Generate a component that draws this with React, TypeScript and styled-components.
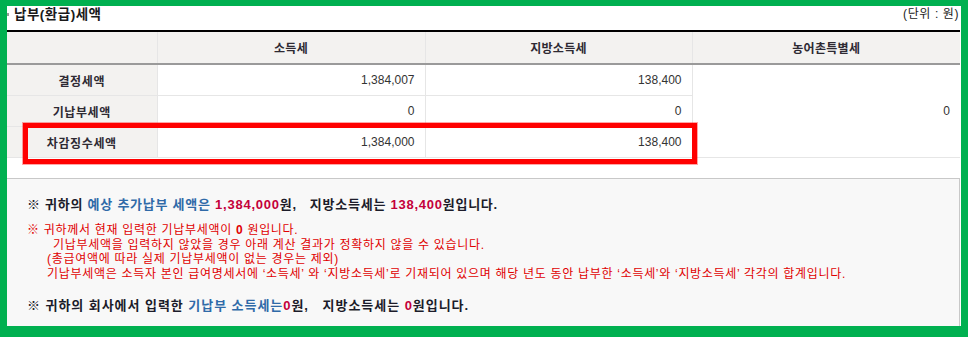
import styled, { createGlobalStyle } from "styled-components";

const GlobalStyle = createGlobalStyle`
  html, body {
    margin: 0;
    padding: 0;
    background: #fff;
  }
  body {
    font-family: "Liberation Sans", "Noto Sans CJK KR", sans-serif;
  }
`;

const rows = [
  { label: "결정세액", income: "1,384,007", local: "138,400" },
  { label: "기납부세액", income: "0", local: "0" },
  { label: "차감징수세액", income: "1,384,000", local: "138,400" },
];

export default function App() {
  return (
    <Frame>
      <GlobalStyle />
      <TitleBar>
        <Title>
          <Bullet />
          납부(환급)세액
        </Title>
        <Unit>(단위 : 원)</Unit>
      </TitleBar>

      <TableWrap>
        <Table>
          <colgroup>
            <col style={{ width: 150 }} />
            <col style={{ width: 268 }} />
            <col style={{ width: 267 }} />
            <col style={{ width: 268 }} />
          </colgroup>
          <thead>
            <tr>
              <Th></Th>
              <Th>소득세</Th>
              <Th>지방소득세</Th>
              <Th>농어촌특별세</Th>
            </tr>
          </thead>
          <tbody>
            {rows.map((r, i) => (
              <tr key={r.label}>
                <Label>{r.label}</Label>
                <Value>{r.income}</Value>
                <Value>{r.local}</Value>
                {i === 0 && <Value rowSpan={3}>0</Value>}
              </tr>
            ))}
          </tbody>
        </Table>
        <Highlight />
      </TableWrap>

      <NoticeBox>
        <Summary>
          ※ 귀하의 <Blue>예상 추가납부 세액은</Blue> <Num>1,384,000</Num>원,
          &nbsp;&nbsp;지방소득세는 <Num>138,400</Num>원입니다.
        </Summary>

        <Warning>
          <WarnLine>
            ※ 귀하께서 현재 입력한 기납부세액이 <b>0</b> 원입니다.
          </WarnLine>
          <WarnLine $indent={26}>
            기납부세액을 입력하지 않았을 경우 아래 계산 결과가 정확하지 않을 수 있습니다.
          </WarnLine>
          <WarnLine $indent={20}>
            (총급여액에 따라 실제 기납부세액이 없는 경우는 제외)
          </WarnLine>
          <WarnLine $indent={20}>
            기납부세액은 소득자 본인 급여명세서에 ‘소득세’ 와 ‘지방소득세’로 기재되어 있으며
            해당 년도 동안 납부한 ‘소득세’와 ‘지방소득세’ 각각의 합계입니다.
          </WarnLine>
        </Warning>

        <Summary $gap={16} $spacing={0.95}>
          ※ 귀하의 회사에서 입력한 <Blue>기납부 소득세는</Blue>
          <Num>0</Num>원, &nbsp;&nbsp;지방소득세는 <Num>0</Num>원입니다.
        </Summary>
      </NoticeBox>
    </Frame>
  );
}

const Frame = styled.div`
  width: 968px;
  height: 337px;
  box-sizing: border-box;
  border-style: solid;
  border-color: #00b050;
  border-width: 6px 7px 11px 7px;
  background: #fff;
  overflow: hidden;
`;

const TitleBar = styled.div`
  display: flex;
  justify-content: space-between;
  align-items: flex-start;
  height: 24px;
  width: 953px;
`;

const Title = styled.h2`
  display: flex;
  align-items: center;
  margin: 0;
  font-size: 13.5px;
  font-weight: 700;
  line-height: 18px;
  letter-spacing: 0.5px;
  color: #1a1a1a;
`;

const Bullet = styled.span`
  display: inline-block;
  width: 2px;
  height: 3px;
  background: #999;
  margin-right: 5px;
  margin-top: -2px;
`;

const Unit = styled.span`
  font-size: 12px;
  line-height: 16px;
  letter-spacing: 0.6px;
  color: #222;
  padding-right: 1px;
`;

const TableWrap = styled.div`
  position: relative;
  width: 953px;
`;

const Table = styled.table`
  width: 953px;
  border-collapse: collapse;
  table-layout: fixed;
  border-top: 2px solid #000;
  font-size: 12px;
`;

const Th = styled.th`
  height: 31px;
  padding: 0;
  background: #f3f2f0;
  border-bottom: 2px solid #9a9a9a;
  border-left: 1px solid #e6e6e6;
  color: #2e2a33;
  font-weight: 700;
  letter-spacing: 0.3px;

  &:first-child {
    border-left: none;
  }
`;

const Label = styled.td`
  height: 30px;
  padding: 0;
  background: #f3f2f0;
  border-bottom: 1px solid #e6e6e6;
  text-align: center;
  color: #2e2a33;
  font-weight: 700;
  letter-spacing: 0.6px;
`;

const Value = styled.td`
  height: 30px;
  padding: 0 10px 0 0;
  border-bottom: 1px solid #e6e6e6;
  border-left: 1px solid #e6e6e6;
  text-align: right;
  color: #333;
`;

const Highlight = styled.div`
  position: absolute;
  left: 16px;
  top: 93px;
  width: 674px;
  height: 41px;
  box-sizing: border-box;
  border: 5px solid #ff0000;
  box-shadow: 0 0 0 1px rgba(255, 0, 0, 0.35);
  pointer-events: none;
`;

const NoticeBox = styled.div`
  margin-top: 20px;
  width: 953px;
  box-sizing: border-box;
  min-height: 160px;
  padding: 17px 0 0 20px;
  background: #f8f8f8;
  border: 1px solid #c8c8c8;
  border-left: none;
`;

const Summary = styled.p<{ $gap?: number; $spacing?: number }>`
  margin: ${(p) => p.$gap ?? 0}px 0 0;
  font-size: 13px;
  line-height: 18px;
  font-weight: 700;
  letter-spacing: ${(p) => p.$spacing ?? 0.75}px;
  color: #1c1c2a;
  white-space: nowrap;
`;

const Blue = styled.span`
  color: #2f6aa8;
`;

const Num = styled.span`
  color: #c4003a;
`;

const Warning = styled.div`
  margin-top: 9px;
  color: #e00000;
  font-size: 12px;
  line-height: 14.5px;
  letter-spacing: 0.7px;
`;

const WarnLine = styled.div<{ $indent?: number }>`
  padding-left: ${(p) => p.$indent ?? 0}px;
  white-space: nowrap;
`;
